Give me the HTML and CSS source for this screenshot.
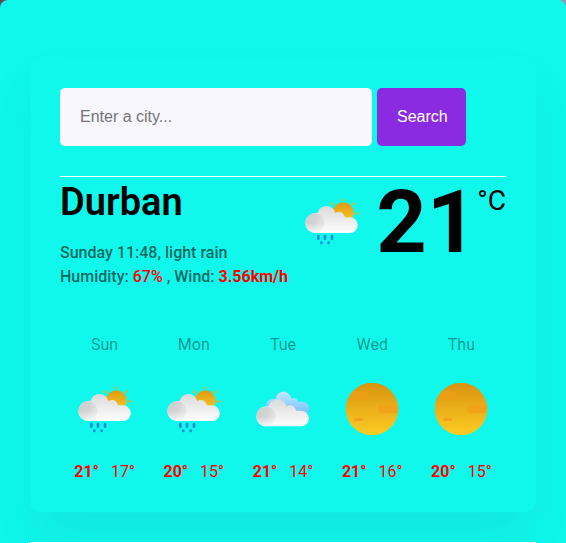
FILE: index.html
```html
<!DOCTYPE html>
<html lang="en">
<head>
<meta charset="utf-8">
<meta name="viewport" content="width=device-width, initial-scale=1">
<title>Weather</title>
<link rel="stylesheet" href="styles.css">
</head>
<body>
<svg class="defs" aria-hidden="true">
  <defs>
    <linearGradient id="sun" x1="0" y1="0" x2="0" y2="1"><stop offset="0" stop-color="#d8930f"/><stop offset="1" stop-color="#fecd24"/></linearGradient>
    <linearGradient id="small-sun" x1="0" y1="0" x2="0" y2="1"><stop offset="0" stop-color="#dd9a18"/><stop offset="1" stop-color="#fecb22"/></linearGradient>
    <linearGradient id="cloud" gradientUnits="userSpaceOnUse" x1="0" y1="56" x2="0" y2="138"><stop offset="0" stop-color="#d9d9d9"/><stop offset="1" stop-color="#fefefe"/></linearGradient>
    <linearGradient id="puff" x1="0" y1="0.35" x2="1" y2="0.65"><stop offset="0" stop-color="#cfcfcf"/><stop offset="0.5" stop-color="#d3d3d3"/><stop offset="1" stop-color="#e8e8e8"/></linearGradient>
    <linearGradient id="puff-light" x1="0" y1="0" x2="0" y2="1"><stop offset="0.5" stop-color="#fff" stop-opacity="0"/><stop offset="1" stop-color="#fff" stop-opacity="0.8"/></linearGradient>
    <linearGradient id="blue" gradientUnits="userSpaceOnUse" x1="0" y1="50" x2="0" y2="116"><stop offset="0" stop-color="#c4e8fe"/><stop offset="1" stop-color="#72c0fa"/></linearGradient>
    <clipPath id="disc"><ellipse cx="111" cy="117" rx="79" ry="79"/></clipPath>
    <g id="cloud-shape">
      <path fill="url(#cloud)" d="M70 138A30 30 0 0 1 70 78Q74 77 77 78A27 27 0 0 1 130 79Q135 74 143 75Q155 77 159 91H174A23.500 23.500 0 0 1 174 138Z"/>
      <circle cx="69" cy="108" r="29" fill="url(#puff)"/>
      <circle cx="69" cy="108" r="30" fill="url(#puff-light)"/>
    </g>
    <symbol id="rain" viewBox="24 6 192 180">
      <circle cx="154" cy="77" r="31" fill="url(#small-sun)"/>
      <path d="M152 35V42M187 47L181 54M190 79H200M118 47L124 54" stroke="#edae1c" stroke-width="5"/>
      <use href="#cloud-shape"/>
      <path d="M79 147V155M99 147V155M120 147V155" stroke="#238dd0" stroke-width="8" stroke-linecap="round"/>
      <path d="M88 167V168M110 167V168" stroke="#238dd0" stroke-width="8" stroke-linecap="round"/>
    </symbol>
    <symbol id="clouds" viewBox="18 6 192 180">
      <path fill="url(#blue)" d="M64 98Q60 74 84 72H92C94 45 133 42 139 71Q152 64 161 81Q183 78 192 92Q197 113 180 122H80Z"/>
      <use href="#cloud-shape" x="-6" y="16"/>
    </symbol>
    <symbol id="clear" viewBox="15 21 192 180">
      <g clip-path="url(#disc)">
        <rect x="32" y="38" width="158" height="158" fill="url(#sun)"/>
        <rect x="10" y="63" width="91" height="27" rx="13" fill="#e99e15"/>
        <rect x="129" y="104" width="90" height="25" rx="12" fill="#f0a318"/>
        <rect x="57" y="144" width="28" height="9" rx="4" fill="#f0a318"/>
      </g>
    </symbol>
  </defs>
</svg>
<div class="page">
  <main class="card">
    <form class="search">
      <input class="search-input" type="search" placeholder="Enter a city..." aria-label="City">
      <button class="search-button" type="submit">Search</button>
    </form>
    <section class="current">
      <div>
        <h1 class="city">Durban</h1>
        <p class="details">Sunday 11:48, light rain<br>Humidity: <span class="humidity">67%</span> , Wind: <strong class="wind">3.56km/h</strong></p>
      </div>
      <div class="temperature">
        <svg class="icon" role="img" aria-label="Light rain"><use href="#rain"/></svg>
        <span class="value">21</span>
        <span class="unit">°C</span>
      </div>
    </section>
    <section class="forecast">
      <div class="day"><div class="name">Sun</div><svg class="icon"><use href="#rain"/></svg><div class="range"><strong>21°</strong><span>17°</span></div></div>
      <div class="day"><div class="name">Mon</div><svg class="icon"><use href="#rain"/></svg><div class="range"><strong>20°</strong><span>15°</span></div></div>
      <div class="day"><div class="name">Tue</div><svg class="icon"><use href="#clouds"/></svg><div class="range"><strong>21°</strong><span>14°</span></div></div>
      <div class="day"><div class="name">Wed</div><svg class="icon"><use href="#clear"/></svg><div class="range"><strong>21°</strong><span>16°</span></div></div>
      <div class="day"><div class="name">Thu</div><svg class="icon"><use href="#clear"/></svg><div class="range"><strong>20°</strong><span>15°</span></div></div>
    </section>
  </main>
  <hr class="divider">
</div>
</body>
</html>
```
FILE: styles.css
```css
* { box-sizing: border-box; }
body {
  margin: 0;
  background: linear-gradient(90deg, #59484f, #9a91b5);
  font-family: Roboto, "Liberation Sans", sans-serif;
  font-size: 16px;
  line-height: 24px;
}
.defs { position: absolute; width: 0; height: 0; }
.page {
  padding: 58px 30px 0;
  background: #0ff8eb;
  border-radius: 8px 8px 0 0;
}
.card {
  padding: 30px;
  border-radius: 10px;
  background: #0ff8eb;
  box-shadow: 0 30px 50px rgba(65, 50, 100, 0.08);
}
.search {
  display: flex;
  gap: 5px;
  padding-right: 40px;
  margin-bottom: 30px;
}
.search-input, .search-button {
  height: 58px;
  border: 0;
  border-radius: 5px;
  padding: 0 20px;
  font-family: "Liberation Sans", sans-serif;
  font-size: 16px;
}
.search-input {
  flex: 1;
  min-width: 0;
  background: #f8f7ff;
  appearance: none;
}
.search-input::placeholder { color: #757575; }
.search-button {
  width: 89px;
  background: #8a2be2;
  color: #fff;
}
.current {
  display: flex;
  justify-content: space-between;
  padding-top: 3px;
  border-top: 1px solid #fff;
}
.city {
  margin: 0;
  font-size: 38px;
  font-weight: 600;
  line-height: 44px;
}
.details {
  margin: 17px 0 0;
  color: rgba(0, 0, 0, 0.6);
  font-weight: 500;
}
.humidity, .wind { color: red; }
.humidity { font-weight: 500; }
.wind { font-weight: 700; }
.icon { display: block; width: 64px; height: 60px; }
.temperature { display: flex; align-items: flex-start; }
.temperature .icon { margin-top: 9px; margin-right: 12px; }
.value { font-size: 88px; font-weight: 700; line-height: 84px; }
.unit { font-size: 28px; line-height: 42px; font-weight: 400; }
.forecast {
  display: grid;
  grid-template-columns: repeat(5, 1fr);
  margin-top: 44px;
}
.day {
  display: flex;
  flex-direction: column;
  align-items: center;
}
.day .icon { margin: 20px 0 25px; }
.name { color: rgba(0, 0, 0, 0.4); }
.range { display: flex; gap: 12px; color: red; line-height: 20px; }
.range strong { font-weight: 700; }
.divider {
  margin: 30px 0 0;
  border: 0;
  border-top: 1px solid #fff;
}
```
